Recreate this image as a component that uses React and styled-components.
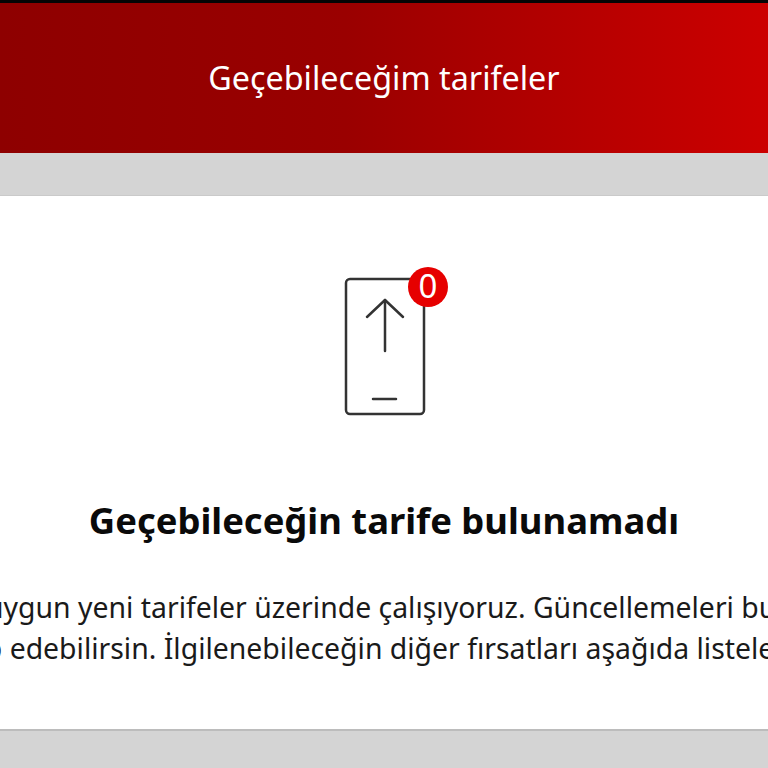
import React from "react";
import styled, { createGlobalStyle } from "styled-components";

const GlobalStyle = createGlobalStyle`
  html, body {
    margin: 0;
    padding: 0;
    height: 100%;
    overflow: hidden;
    background: #d4d4d4;
    font-family: "Noto Sans", "Open Sans", sans-serif;
  }
`;

const App = () => {
  return (
    <StPage>
      <GlobalStyle />
      <StHeader>
        <StHeaderTitle>Geçebileceğim tarifeler</StHeaderTitle>
      </StHeader>
      <StCard>
        <StIconWrap>
          <svg width="84" height="140" viewBox="0 0 84 140" fill="none" stroke="#333" strokeWidth="2.5" strokeLinecap="round" strokeLinejoin="round">
            <rect x="2" y="2" width="78" height="135" rx="4" />
            <path d="M41 74V23" />
            <path d="M23 40L41 23L59 40" />
            <path d="M29 122H52" />
          </svg>
          <StBadge>0</StBadge>
        </StIconWrap>
        <StTitle>Geçebileceğin tarife bulunamadı</StTitle>
        <StText>
          <StLine $shift={0}>Sana uygun yeni tarifeler üzerinde çalışıyoruz. Güncellemeleri buradan</StLine>
          <StLine $shift={-5}>takip edebilirsin. İlgilenebileceğin diğer fırsatları aşağıda listeledik.</StLine>
        </StText>
      </StCard>
    </StPage>
  );
};

export default App;

const StPage = styled.div`
  width: 768px;
  height: 768px;
  overflow: hidden;
  display: flex;
  flex-direction: column;
  background: #d4d4d4;
`;

const StHeader = styled.header`
  height: 150px;
  border-top: 3px solid #050505;
  display: flex;
  align-items: center;
  justify-content: center;
  background: linear-gradient(90deg, #8e0000 0%, #9a0000 45%, #cc0000 100%);
`;

const StHeaderTitle = styled.h1`
  margin: 0 0 2px;
  font-size: 32.3px;
  font-weight: 400;
  color: #fff;
`;

const StCard = styled.main`
  margin-top: 42px;
  height: 536px;
  background: #fff;
  border-top: 1px solid #cacaca;
  border-bottom: 2px solid #bcbcbc;
  display: flex;
  flex-direction: column;
  align-items: center;
  padding-top: 81px;
  box-sizing: border-box;
`;

const StIconWrap = styled.div`
  position: relative;
  width: 84px;
  height: 140px;
  margin-left: 4px;
`;

const StBadge = styled.span`
  position: absolute;
  top: -10px;
  left: 64px;
  width: 40px;
  height: 40px;
  border-radius: 50%;
  background: #e60000;
  color: #fff;
  font-size: 33px;
  line-height: 38px;
  text-align: center;
`;

const StTitle = styled.h2`
  margin: 79px 0 0;
  font-size: 36.4px;
  line-height: 48px;
  font-weight: 700;
  color: #0a0a0a;
`;

const StText = styled.div`
  margin-top: 43px;
  width: 768px;
  overflow: hidden;
  display: flex;
  flex-direction: column;
  align-items: center;
`;

const StLine = styled.p`
  margin: 0;
  font-size: 28.4px;
  line-height: 41px;
  color: #1a1a1a;
  white-space: nowrap;
  transform: translateX(${({ $shift }) => $shift}px);
`;
